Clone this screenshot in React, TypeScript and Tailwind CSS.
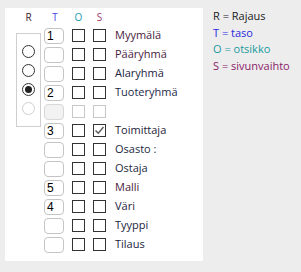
import React from 'react';

interface Row {
  label: string;
  level?: string;
  otsikko?: boolean;
  sivu?: boolean;
  disabled?: boolean;
  tone?: string;
}

const rows: Row[] = [
  { label: 'Myymälä', level: '1', tone: 'text-[#4a1c3c]' },
  { label: 'Pääryhmä', tone: 'text-[#4a1c3c]' },
  { label: 'Alaryhmä', tone: 'text-[#1c2540]' },
  { label: 'Tuoteryhmä', level: '2', tone: 'text-[#1c2a48]' },
  { label: '', disabled: true },
  { label: 'Toimittaja', level: '3', sivu: true, tone: 'text-[#1c2236]' },
  { label: 'Osasto :', tone: 'text-[#1c2a40]' },
  { label: 'Ostaja', tone: 'text-[#1c2a40]' },
  { label: 'Malli', level: '5', tone: 'text-[#4a1c3c]' },
  { label: 'Väri', level: '4', tone: 'text-[#1c2540]' },
  { label: 'Tyyppi', tone: 'text-[#1c2540]' },
  { label: 'Tilaus', tone: 'text-[#1c2540]' },
];

const Check: React.FC<{ checked?: boolean; disabled?: boolean }> = ({ checked, disabled }) => (
  <div
    className={`w-[13px] h-[13px] border flex items-center justify-center ${
      disabled ? 'border-[#c8c8c8]' : 'border-[#333333]'
    }`}
  >
    {checked && (
      <svg width="11" height="11" viewBox="0 0 11 11">
        <path d="M1.5 5.5 L4.3 8.3 L9.5 2" fill="none" stroke="#5a5a5a" strokeWidth="1.4" />
      </svg>
    )}
  </div>
);

const Radio: React.FC<{ checked?: boolean; disabled?: boolean }> = ({ checked, disabled }) => (
  <div className="h-[19px] flex items-center justify-center">
    <div
      className={`w-[13px] h-[13px] rounded-full border bg-white flex items-center justify-center ${
        disabled ? 'border-[#cfcfcf]' : 'border-[#333333]'
      }`}
    >
      {checked && <div className="w-[7px] h-[7px] rounded-full bg-[#222222]" />}
    </div>
  </div>
);

export default function App() {
  return (
    <div
      className="w-[301px] h-[272px] bg-[#ededed] flex pt-[8px] pl-[5px]"
      style={{ fontFamily: '"Open Sans", "Liberation Sans", sans-serif' }}
    >
      <div className="w-[198px] h-[253px] bg-white pl-[11px]">
        {/* column headers */}
        <div className="h-[18px] flex items-center text-[10px] leading-none">
          <div className="w-[25px] text-center text-[#3a1a2e]">R</div>
          <div className="w-[22px] ml-[3px] text-center text-[#4444dd]">T</div>
          <div className="w-[13px] ml-[6px] text-center text-[#1a9ab0]">O</div>
          <div className="w-[13px] ml-[8px] text-center text-[#a03a72]">S</div>
        </div>

        <div className="flex">
          {/* rajaus radios */}
          <div className="w-[25px] pt-[7px]">
            <div className="border border-[#cfcfcf] py-[8px]">
              <Radio />
              <Radio />
              <Radio checked />
              <Radio disabled />
            </div>
          </div>

          <div className="ml-[3px]">
            {rows.map((row, i) => (
              <div key={i} className="h-[19px] flex items-center">
                <div
                  className={`w-[20px] h-[16px] rounded-[4px] border pl-[2px] flex items-center text-[12px] text-black ${
                    row.disabled ? 'bg-[#f2f2f2] border-[#d8d8d8]' : 'bg-white border-[#c4c4c4]'
                  }`}
                  style={{ fontFamily: '"Liberation Sans", Arial, sans-serif' }}
                >
                  {row.level}
                </div>
                <div className="ml-[8px]">
                  <Check checked={row.otsikko} disabled={row.disabled} />
                </div>
                <div className="ml-[8px]">
                  <Check checked={row.sivu} disabled={row.disabled} />
                </div>
                <div className={`ml-[9px] text-[11px] whitespace-nowrap ${row.tone}`}>{row.label}</div>
              </div>
            ))}
          </div>
        </div>
      </div>

      {/* legend */}
      <div className="ml-[10px] text-[11px] leading-[16.7px]">
        <div className="text-[#1a1a1a]">R = Rajaus</div>
        <div className="text-[#2a2ae0]">T = taso</div>
        <div className="text-[#1a9a9e]">O = otsikko</div>
        <div className="text-[#8a1a68]">S = sivunvaihto</div>
      </div>
    </div>
  );
}
